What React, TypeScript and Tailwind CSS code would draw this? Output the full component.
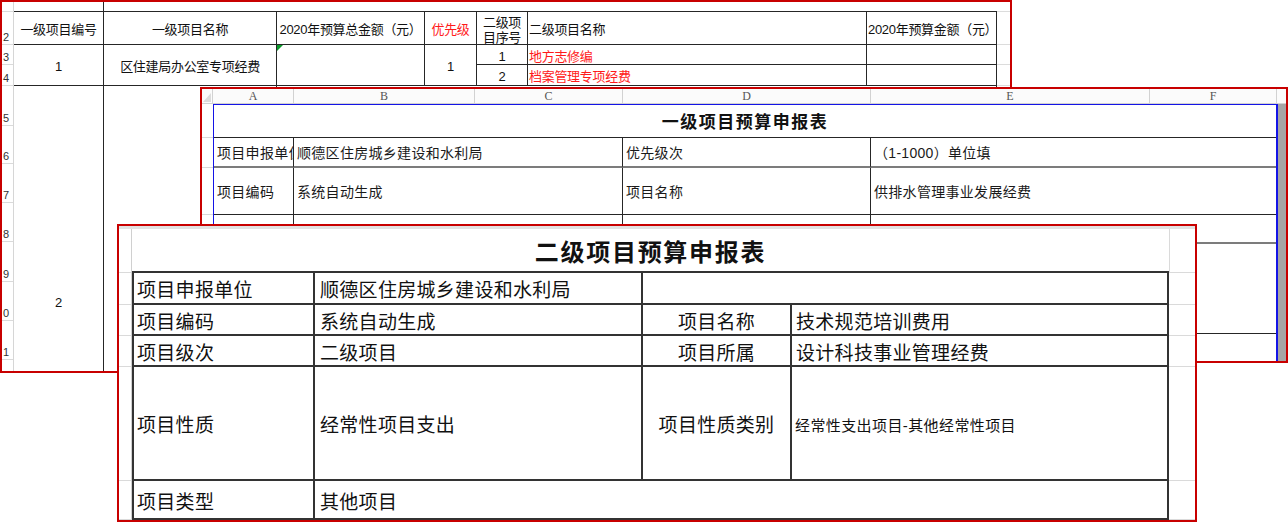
import React from "react";

function Panel1() {
  const rows = [
    { c: "h-[10px]", l: "" },
    { c: "h-[33px]", l: "2" },
    { c: "h-[20px]", l: "3" },
    { c: "h-[21px]", l: "4" },
    { c: "h-[40px]", l: "5" },
    { c: "h-[38px]", l: "6" },
    { c: "h-[39px]", l: "7" },
    { c: "h-[39px]", l: "8" },
    { c: "h-[40px]", l: "9" },
    { c: "h-[39px]", l: "0" },
    { c: "h-[39px]", l: "1" },
    { c: "h-[39px]", l: "" },
  ];
  const cell = "flex items-center justify-center pt-[4px] border-r border-b border-[#262626] overflow-hidden whitespace-nowrap";
  const extra = "border-b border-[#dcdcdc]";
  return (
    <div className="absolute left-0 top-0 w-[1012px] h-[373px] border-2 border-[#c80000] bg-white overflow-hidden flex">
      <div className="w-[12px] shrink-0 flex flex-col border-r border-[#d6d6d6]">
        {rows.map((r, i) => (
          <div key={i} className={`${r.c} shrink-0 flex items-end pl-[1px] pb-[1px] border-b border-[#dadada] text-[11px] leading-[12px] text-[#333]`}>
            {r.l}
          </div>
        ))}
      </div>
      <div className="grid grid-cols-[90px_173px_148px_52px_51px_339px_130px_13px] grid-rows-[10px_33px_20px_21px_430px] text-[13px] leading-[14px] tracking-[-0.3px] text-[#111] shrink-0">
        {/* top row */}
        <div className="border-r border-b border-[#262626]" />
        <div className="col-span-6 border-b border-[#262626]" />
        <div className={extra} />
        {/* header */}
        <div className={cell}>一级项目编号</div>
        <div className={cell}>一级项目名称</div>
        <div className={cell}>2020年预算总金额（元）</div>
        <div className={`${cell} text-[#ff1a1a]`}>优先级</div>
        <div className={`${cell} flex-col leading-[15px]`}>
          <span>二级项</span>
          <span>目序号</span>
        </div>
        <div className={`${cell} justify-start pl-[1px]`}>二级项目名称</div>
        <div className={`${cell} justify-start pl-[1px]`}>2020年预算金额（元）</div>
        <div className={extra} />
        {/* r1 */}
        <div className={`${cell} row-span-2`}>1</div>
        <div className={`${cell} row-span-2`}>区住建局办公室专项经费</div>
        <div className={`${cell} row-span-2 relative`}>
          <div className="absolute left-0 top-0 w-0 h-0 border-t-[6px] border-r-[6px] border-t-[#0a9a2a] border-r-transparent" />
        </div>
        <div className={`${cell} row-span-2`}>1</div>
        <div className={cell}>1</div>
        <div className={`${cell} justify-start pl-[1px] text-[#ff1a1a]`}>地方志修编</div>
        <div className={cell} />
        <div className={extra} />
        {/* r2 */}
        <div className={cell}>2</div>
        <div className={`${cell} justify-start pl-[1px] text-[#ff1a1a]`}>档案管理专项经费</div>
        <div className={cell} />
        <div className={extra} />
        {/* big row */}
        <div className={cell}>2</div>
        <div className={cell} />
        <div className="col-span-5 border-r border-b border-[#262626]" />
        <div className={extra} />
      </div>
    </div>
  );
}

function Panel2() {
  const colHdr = "flex items-center justify-center border-r border-b border-[#d2d2d2] text-[12px] leading-none text-[#555] [font-family:'Liberation_Serif',serif]";
  const rh = ["h-[34px]", "h-[30px]", "h-[47px]", "h-[29px]", "h-[90px]", "flex-1"];
  const c = "flex items-center overflow-hidden whitespace-nowrap pl-[3px] pt-[2px]";
  return (
    <div className="absolute left-[200px] top-[87px] w-[1088px] h-[276px] border-2 border-[#c80000] bg-white overflow-hidden flex flex-col">
      <div className="h-[15px] shrink-0 flex bg-[#fbfbfb]">
        <div className="w-[11px] border-r border-b border-[#d2d2d2] relative">
          <svg className="absolute right-[1px] bottom-[1px]" width="8" height="9" viewBox="0 0 8 9">
            <polygon points="8,0 8,9 0,9" fill="#dcdcdc" />
          </svg>
        </div>
        <div className={`${colHdr} w-[81px]`}>A</div>
        <div className={`${colHdr} w-[181px]`}>B</div>
        <div className={`${colHdr} w-[148px]`}>C</div>
        <div className={`${colHdr} w-[248px]`}>D</div>
        <div className={`${colHdr} w-[279px]`}>E</div>
        <div className={`${colHdr} w-[127px]`}>F</div>
        <div className="flex-1 border-b border-[#d2d2d2]" />
      </div>
      <div className="flex flex-1">
        <div className="w-[11px] shrink-0 flex flex-col">
          {rh.map((h, i) => (
            <div key={i} className={`${h} shrink-0 border-b border-[#d8d8d8]`} />
          ))}
        </div>
        <div className="w-[1065px] shrink-0 border-l border-t border-r-2 border-[#1414e6] text-[14px] tracking-[0.3px] text-[#1a1a1a]">
          <div className="grid h-full grid-cols-[80px_329px_248px_405px] grid-rows-[33px_30px_47px_29px_90px_1fr]">
            <div className="col-span-4 flex items-center justify-center pt-[4px] border-b border-[#262626] font-bold text-[17px] tracking-[1.5px] text-[#111]">
              一级项目预算申报表
            </div>
            {/* r1 */}
            <div className={`${c} pl-[2px] border-r border-r-[#262626] border-b-2 border-b-[#7c7c7c]`}>项目申报单位</div>
            <div className={`${c} border-r border-r-[#262626] border-b-2 border-b-[#7c7c7c]`}>顺德区住房城乡建设和水利局</div>
            <div className={`${c} border-r border-r-[#262626] border-b-2 border-b-[#7c7c7c]`}>优先级次</div>
            <div className={`${c} border-b-2 border-b-[#7c7c7c]`}>（1-1000）单位填</div>
            {/* r2 */}
            <div className={`${c} pl-[2px] border-r border-b border-[#262626]`}>项目编码</div>
            <div className={`${c} border-r border-b border-[#262626]`}>系统自动生成</div>
            <div className={`${c} border-r border-b border-[#262626]`}>项目名称</div>
            <div className={`${c} border-b border-[#262626]`}>供排水管理事业发展经费</div>
            {/* r3 */}
            <div className={`${c} border-r border-r-[#262626] border-b-2 border-b-[#7c7c7c]`} />
            <div className={`${c} border-r border-r-[#262626] border-b-2 border-b-[#7c7c7c]`} />
            <div className={`${c} border-r border-r-[#262626] border-b-2 border-b-[#7c7c7c]`} />
            <div className={`${c} border-b-2 border-b-[#7c7c7c]`} />
            {/* r4 */}
            <div className={`${c} border-r border-b border-[#262626]`} />
            <div className={`${c} border-r border-b border-[#262626]`} />
            <div className={`${c} border-r border-b border-[#262626]`} />
            <div className={`${c} border-b border-[#262626]`} />
            {/* r5 */}
            <div className={`${c} border-r border-[#262626]`} />
            <div className={`${c} border-r border-[#262626]`} />
            <div className={`${c} border-r border-[#262626]`} />
            <div className={c} />
          </div>
        </div>
        <div className="w-[8px] shrink-0 bg-[#a6a6a6]" />
      </div>
    </div>
  );
}

function Panel3() {
  const rh = ["h-[44px]", "h-[32px]", "h-[31px]", "h-[31px]", "h-[114px]", "flex-1"];
  const b = "flex items-center pt-[6px] overflow-hidden whitespace-nowrap border-r-2 border-b-2 border-[#333]";
  const ex = "border-b border-[#dadada]";
  return (
    <div className="absolute left-[117px] top-[224px] w-[1080px] h-[298px] border-2 border-[#c80000] bg-white overflow-hidden flex flex-col">
      <div className="h-[3px] shrink-0 bg-[#e2e2e2]" />
      <div className="flex flex-1">
        <div className="w-[13px] shrink-0 flex flex-col border-r border-[#d0d0d0]">
          {rh.map((h, i) => (
            <div key={i} className={`${h} shrink-0 border-b border-[#dadada]`} />
          ))}
        </div>
        <div className="grid w-[1063px] shrink-0 grid-cols-[183px_328px_149px_377px_26px] grid-rows-[44px_32px_31px_31px_114px_1fr] text-[19px] leading-[22px] tracking-[0.3px] text-[#111]">
          <div className="col-span-4 flex items-center justify-center pt-[6px] border-b-2 border-[#333] font-bold text-[24px] leading-[28px] tracking-[1.7px] text-[#111]">
            二级项目预算申报表
          </div>
          <div className="border-l border-b border-[#dadada]" />
          {/* r1 */}
          <div className={`${b} border-l-2 pl-[3px]`}>项目申报单位</div>
          <div className={`${b} pl-[5px]`}>顺德区住房城乡建设和水利局</div>
          <div className={`${b} col-span-2`} />
          <div className={ex} />
          {/* r2 */}
          <div className={`${b} border-l-2 pl-[3px]`}>项目编码</div>
          <div className={`${b} pl-[5px]`}>系统自动生成</div>
          <div className={`${b} justify-center`}>项目名称</div>
          <div className={`${b} pl-[4px]`}>技术规范培训费用</div>
          <div className={ex} />
          {/* r3 */}
          <div className={`${b} border-l-2 pl-[3px]`}>项目级次</div>
          <div className={`${b} pl-[5px]`}>二级项目</div>
          <div className={`${b} justify-center`}>项目所属</div>
          <div className={`${b} pl-[4px]`}>设计科技事业管理经费</div>
          <div className={ex} />
          {/* r4 */}
          <div className={`${b} border-l-2 pl-[3px]`}>项目性质</div>
          <div className={`${b} pl-[5px]`}>经常性项目支出</div>
          <div className={`${b} justify-center`}>项目性质类别</div>
          <div className={`${b} pl-[3px] text-[15px] tracking-[0.4px]`}>经常性支出项目-其他经常性项目</div>
          <div className={ex} />
          {/* r5 */}
          <div className={`${b} border-l-2 pl-[3px]`}>项目类型</div>
          <div className={`${b} col-span-3 pl-[5px]`}>其他项目</div>
          <div className={ex} />
        </div>
      </div>
    </div>
  );
}

export default function App() {
  return (
    <div className="relative w-[1288px] h-[523px] overflow-hidden bg-white [font-family:'Liberation_Sans','Noto_Sans_CJK_SC',sans-serif]">
      <Panel1 />
      <Panel2 />
      <Panel3 />
    </div>
  );
}
